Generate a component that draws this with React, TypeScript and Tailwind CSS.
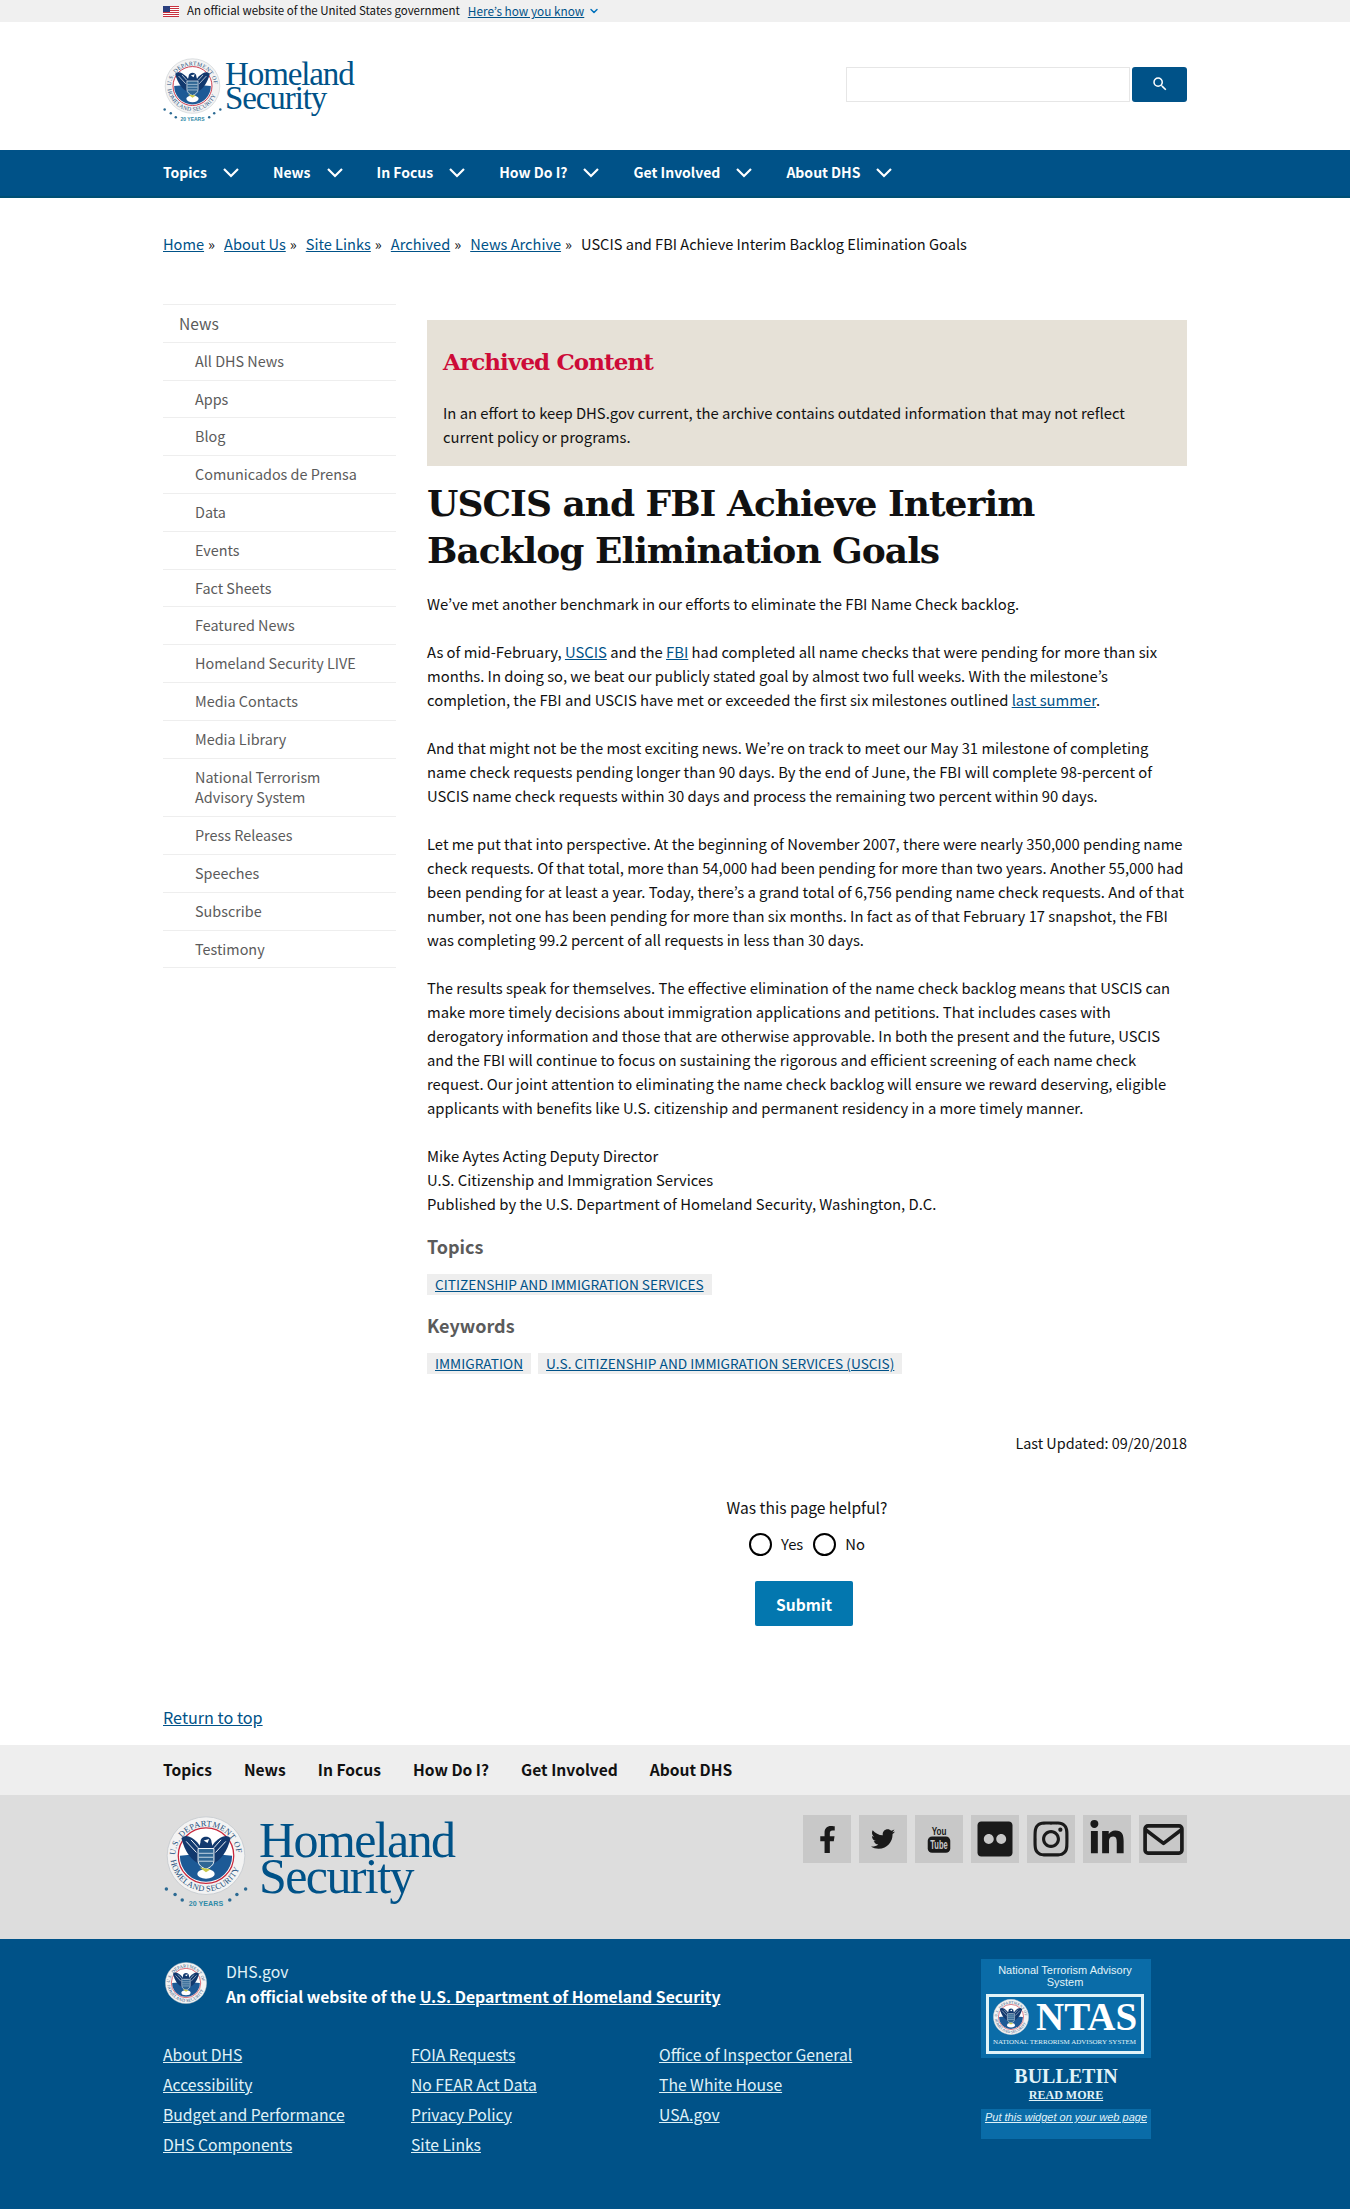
import { ChevronDown } from 'lucide-react'
import { MdSearch } from 'react-icons/md'
import { FaFacebookF, FaTwitter, FaFlickr, FaInstagram, FaLinkedinIn } from 'react-icons/fa'

const topNav = ['Topics', 'News', 'In Focus', 'How Do I?', 'Get Involved', 'About DHS']

const sideItems = [
  'All DHS News',
  'Apps',
  'Blog',
  'Comunicados de Prensa',
  'Data',
  'Events',
  'Fact Sheets',
  'Featured News',
  'Homeland Security LIVE',
  'Media Contacts',
  'Media Library',
  'National Terrorism Advisory System',
  'Press Releases',
  'Speeches',
  'Subscribe',
  'Testimony',
]

const crumbs = ['Home', 'About Us', 'Site Links', 'Archived', 'News Archive']

const footerCols = [
  ['About DHS', 'Accessibility', 'Budget and Performance', 'DHS Components'],
  ['FOIA Requests', 'No FEAR Act Data', 'Privacy Policy', 'Site Links'],
  ['Office of Inspector General', 'The White House', 'USA.gov'],
]

const stars = [[0, 92], [11, 99], [20, 106], [80, 106], [89, 99], [100, 92]]

function A({ children }: { children: React.ReactNode }) {
  return (
    <a href="#" className="text-[#005288] underline">
      {children}
    </a>
  )
}

function Seal({ id, className, anniversary }: { id: string; className: string; anniversary?: boolean }) {
  return (
    <svg viewBox={anniversary ? '-3 0 106 116' : '0 0 100 100'} className={className}>
      <circle cx="50" cy="50" r="49" fill="#f3f3f3" stroke="#c3c8cd" strokeWidth="1" />
      <path id={`${id}-top`} d="M 11 52 A 39 39 0 0 1 89 52" fill="none" />
      <path id={`${id}-bot`} d="M 5 50 A 45 45 0 0 0 95 50" fill="none" />
      <text fontFamily="Liberation Serif, serif" fontSize="10.5" fill="#1d4f7c" letterSpacing="0.5">
        <textPath href={`#${id}-top`} startOffset="2%">U.S. DEPARTMENT OF</textPath>
      </text>
      <text fontFamily="Liberation Serif, serif" fontSize="10.5" fill="#1d4f7c" letterSpacing="0.3">
        <textPath href={`#${id}-bot`} startOffset="4%">HOMELAND SECURITY</textPath>
      </text>
      <circle cx="50" cy="50" r="35" fill="#fff" stroke="#c8283c" strokeWidth="1.6" />
      {/* lower field */}
      <path d="M17 50 A33 33 0 0 0 83 50 L60 48 L50 72 L40 48 Z" fill="#1d5a96" />
      {/* wings */}
      <path d="M19 28 C24 22 32 26 39 33 L44 40 L42 60 C32 57 23 45 19 28 Z" fill="#12396e" />
      <path d="M81 28 C76 22 68 26 61 33 L56 40 L58 60 C68 57 77 45 81 28 Z" fill="#12396e" />
      <path d="M25 32 L38 46 M31 30 L40 40 M62 46 L75 32 M60 40 L69 30" stroke="#fff" strokeWidth="1.2" />
      {/* head */}
      <path d="M43 33 C43 24 57 24 57 33 L59 41 L41 41 Z" fill="#12396e" />
      <path d="M47 31 L54 29 L52 34 Z" fill="#fff" />
      {/* shield */}
      <path d="M40 41 H60 V56 C60 62 55 65 50 67 C45 65 40 62 40 56 Z" fill="#2f6694" stroke="#fff" strokeWidth="1.2" />
      <path d="M41 47 H59 M41 52 H59 M41 57 H59" stroke="#dbe7f0" strokeWidth="1.1" />
      {/* tail and branch */}
      <ellipse cx="50" cy="73" rx="11" ry="6" fill="#fff" />
      <path d="M42 65 L56 67 L50 71 Z" fill="#c9c94a" />
      {anniversary && (
        <g>
          {stars.map(([cx, cy]) => (
            <circle key={cx} cx={cx} cy={cy} r="2.2" fill="#2b6a93" />
          ))}
          <text x="50" y="113" textAnchor="middle" fontFamily="Liberation Sans, sans-serif" fontSize="9" fontWeight="700" fill="#2f8aa8">
            20 YEARS
          </text>
        </g>
      )}
    </svg>
  )
}

function Wordmark({ big }: { big?: boolean }) {
  return (
    <div
      className={`font-['Liberation_Serif',serif] text-[#005288] ${
        big ? 'text-[50px] leading-[36px] tracking-[-1.6px]' : 'text-[33px] leading-[24px] tracking-[-1.1px]'
      }`}
    >
      <div>Homeland</div>
      <div>Security</div>
    </div>
  )
}

function Flag() {
  return (
    <svg viewBox="0 0 16 11" className="h-[11px] w-[16px]">
      <rect width="16" height="11" fill="#fff" />
      {[0, 2, 4, 6, 8, 10].map((y) => (
        <rect key={y} y={y} width="16" height="1" fill="#c8313e" />
      ))}
      <rect width="7" height="6" fill="#2a3f7e" />
    </svg>
  )
}

function YouTubeMark() {
  return (
    <svg viewBox="0 0 30 36" className="h-[32px] w-[26px]">
      <text x="15" y="13" textAnchor="middle" fontFamily="Liberation Sans, sans-serif" fontSize="13" fontWeight="700" fill="#1a1a1a" textLength="17" lengthAdjust="spacingAndGlyphs">
        You
      </text>
      <rect x="2" y="15" width="26" height="19" rx="5" fill="#1a1a1a" />
      <text x="15" y="30" textAnchor="middle" fontFamily="Liberation Sans, sans-serif" fontSize="14" fontWeight="700" fill="#c8c8c8" textLength="20" lengthAdjust="spacingAndGlyphs">
        Tube
      </text>
    </svg>
  )
}

function MailMark() {
  return (
    <svg viewBox="0 0 42 32" className="h-[31px] w-[41px]" fill="none" stroke="#1a1a1a" strokeWidth="3.8" strokeLinejoin="round">
      <rect x="2" y="2" width="38" height="28" rx="3" />
      <path d="M2.5 6 L21 20 L39.5 6" />
    </svg>
  )
}

const social = [
  <FaFacebookF key="f" className="h-[27px] w-[27px] text-[#1a1a1a]" />,
  <FaTwitter key="t" className="h-[24px] w-[24px] text-[#1a1a1a]" />,
  <YouTubeMark key="y" />,
  <FaFlickr key="fl" className="h-[40px] w-[40px] text-[#1a1a1a]" />,
  <FaInstagram key="i" className="h-[40px] w-[40px] text-[#1a1a1a]" />,
  <FaLinkedinIn key="l" className="h-[38px] w-[38px] text-[#1a1a1a]" />,
  <MailMark key="m" />,
]

function Sidebar() {
  return (
    <aside className="w-[233px] shrink-0 pt-[24px]">
      <ul className="border-t border-[#eeeeee] text-[14.4px] leading-[20.8px] text-[#5b5b5b]">
        <li className="border-b border-[#eeeeee] py-[8px] pl-[16px] pr-[16px] text-[15.6px]">News</li>
        {sideItems.map((item) => (
          <li key={item} className="border-b border-[#eeeeee] py-[8px] pl-[32px] pr-[16px]">
            {item}
          </li>
        ))}
      </ul>
    </aside>
  )
}

function Article() {
  return (
    <main className="w-[760px] pt-[40px] text-[14.8px] leading-[24px] text-[#111111]">
      <div className="h-[146px] bg-[#e6e1d7] px-[16px] pt-[24px]">
        <h2 className="font-['DejaVu_Serif',serif] text-[23px] font-bold leading-[36px] tracking-[-0.9px] text-[#cd0b38]">
          Archived Content
        </h2>
        <p className="mt-[21px]">
          In an effort to keep DHS.gov current, the archive contains outdated information that may not reflect current
          policy or programs.
        </p>
      </div>

      <h1 className="mt-[14px] font-['DejaVu_Serif',serif] text-[36px] font-bold leading-[47px] tracking-[-1px] text-[#111111]">
        USCIS and FBI Achieve Interim Backlog Elimination Goals
      </h1>

      <div className="mt-[18px] space-y-[24px]">
        <p>We’ve met another benchmark in our efforts to eliminate the FBI Name Check backlog.</p>
        <p>
          As of mid-February, <A>USCIS</A> and the <A>FBI</A> had completed all name checks that were pending for more
          than six months. In doing so, we beat our publicly stated goal by almost two full weeks. With the milestone’s
          completion, the FBI and USCIS have met or exceeded the first six milestones outlined <A>last summer</A>.
        </p>
        <p>
          And that might not be the most exciting news. We’re on track to meet our May 31 milestone of completing name
          check requests pending longer than 90 days. By the end of June, the FBI will complete 98-percent of USCIS name
          check requests within 30 days and process the remaining two percent within 90 days.
        </p>
        <p>
          Let me put that into perspective. At the beginning of November 2007, there were nearly 350,000 pending name
          check requests. Of that total, more than 54,000 had been pending for more than two years. Another 55,000 had
          been pending for at least a year. Today, there’s a grand total of 6,756 pending name check requests. And of
          that number, not one has been pending for more than six months. In fact as of that February 17 snapshot, the
          FBI was completing 99.2 percent of all requests in less than 30 days.
        </p>
        <p>
          The results speak for themselves. The effective elimination of the name check backlog means that USCIS can
          make more timely decisions about immigration applications and petitions. That includes cases with derogatory
          information and those that are otherwise approvable. In both the present and the future, USCIS and the FBI will
          continue to focus on sustaining the rigorous and efficient screening of each name check request. Our joint
          attention to eliminating the name check backlog will ensure we reward deserving, eligible applicants with
          benefits like U.S. citizenship and permanent residency in a more timely manner.
        </p>
        <p>
          Mike Aytes Acting Deputy Director
          <br />
          U.S. Citizenship and Immigration Services
          <br />
          Published by the U.S. Department of Homeland Security, Washington, D.C.
        </p>
      </div>

      <h3 className="mt-[16px] text-[18px] font-bold leading-[28px] text-[#5b5b5b]">Topics</h3>
      <div className="mt-[14px] flex gap-[7px] text-[13.7px] leading-[21px]">
        <span className="bg-[#eeeeee] px-[8px]">
          <A>CITIZENSHIP AND IMMIGRATION SERVICES</A>
        </span>
      </div>
      <h3 className="mt-[16px] text-[18px] font-bold leading-[28px] text-[#5b5b5b]">Keywords</h3>
      <div className="mt-[14px] flex gap-[7px] text-[13.7px] leading-[21px]">
        <span className="bg-[#eeeeee] px-[8px]">
          <A>IMMIGRATION</A>
        </span>
        <span className="bg-[#eeeeee] px-[8px]">
          <A>U.S. CITIZENSHIP AND IMMIGRATION SERVICES (USCIS)</A>
        </span>
      </div>

      <p className="mt-[57px] text-right text-[14.4px]">Last Updated: 09/20/2018</p>

      {/* Feedback */}
      <form className="mt-[40px] flex flex-col items-center">
        <p className="text-[15.6px]">Was this page helpful?</p>
        <div className="mt-[13px] flex h-[24px] items-center">
          <span className="h-[23px] w-[23px] rounded-full border-2 border-black" />
          <span className="ml-[9px]">Yes</span>
          <span className="ml-[10px] h-[23px] w-[23px] rounded-full border-2 border-black" />
          <span className="ml-[9px]">No</span>
        </div>
        <button className="mr-[6px] mt-[25px] h-[45px] w-[98px] rounded-[2px] bg-[#0377af] text-[15.6px] font-bold text-white">
          Submit
        </button>
      </form>
    </main>
  )
}

export default function App() {
  return (
    <div className="flex min-h-[2209px] flex-col bg-white font-['Noto_Sans_CJK_KR','Open_Sans',sans-serif]">
      {/* Gov banner */}
      <div className="h-[22px] bg-[#f0f0f0]">
        <div className="mx-auto flex h-full w-[1024px] items-center text-[11.5px] text-[#111111]">
          <Flag />
          <span className="ml-[8px]">An official website of the United States government</span>
          <a href="#" className="ml-[8px] text-[11.8px] text-[#005288] underline">
            Here’s how you know
          </a>
          <ChevronDown className="ml-[4px] h-[12px] w-[12px] text-[#0071bc]" strokeWidth={3} />
        </div>
      </div>

      {/* Header */}
      <header className="mx-auto flex h-[128px] w-[1024px] items-center justify-between">
        <div className="flex items-center gap-[3px] pt-[9px]">
          <Seal id="hd" className="h-[65px] w-[59px]" anniversary />
          <div className="pb-[10px]">
            <Wordmark />
          </div>
        </div>
        <div className="flex gap-[2px] pb-[4px]">
          <div className="h-[35px] w-[284px] border border-[#e6e6e6] bg-white" />
          <button className="flex h-[35px] w-[55px] items-center justify-center rounded-[3px] bg-[#005288] text-white">
            <MdSearch className="h-[18px] w-[18px]" />
          </button>
        </div>
      </header>

      {/* Main nav */}
      <nav className="h-[48px] border-b-2 border-[#004f73] bg-[#005288] pb-[2px]">
        <ul className="mx-auto flex h-full w-[1024px] items-center gap-[33px] text-[14px] font-bold text-white">
          {topNav.map((item) => (
            <li key={item} className="flex items-center gap-[15px]">
              {item}
              <svg viewBox="0 0 18 11" className="h-[11px] w-[18px]" fill="none" stroke="#fff" strokeWidth="2.2">
                <path d="M2 2 L9 9 L16 2" />
              </svg>
            </li>
          ))}
        </ul>
      </nav>

      <div className="mx-auto w-[1024px]">
        {/* Breadcrumb */}
        <div className="mt-[34px] flex h-[24px] items-center text-[14.6px] text-[#111111]">
          {crumbs.map((c) => (
            <span key={c} className="mr-[9px]">
              <A>{c}</A>
              <span className="ml-[4px]">»</span>
            </span>
          ))}
          <span>USCIS and FBI Achieve Interim Backlog Elimination Goals</span>
        </div>

        <div className="mt-[24px] flex gap-[31px]">
          <Sidebar />
          <Article />
        </div>

        <a href="#" className="mt-[79px] block text-[16.2px] leading-[24px] text-[#005288] underline">
          Return to top
        </a>
      </div>

      {/* Footer */}
      <div className="mt-[16px] h-[50px] bg-[#eeeeee]">
        <ul className="mx-auto flex h-full w-[1024px] items-center gap-[32px] text-[15.6px] font-bold text-[#111111]">
          {topNav.map((item) => (
            <li key={item}>{item}</li>
          ))}
        </ul>
      </div>

      <div className="h-[144px] bg-[#dddddd]">
        <div className="mx-auto flex w-[1024px] justify-between pt-[20px]">
          <div className="flex gap-[11px]">
            <Seal id="ft" className="ml-[1px] h-[94px] w-[84px]" anniversary />
            <div className="pt-[7px]">
              <Wordmark big />
            </div>
          </div>
          <div className="flex gap-[8px]">
            {social.map((icon) => (
              <span key={icon.key} className="flex h-[48px] w-[48px] items-center justify-center bg-[#c8c8c8]">
                {icon}
              </span>
            ))}
          </div>
        </div>
      </div>

      <footer className="flex-1 bg-[#005288] text-white">
        <div className="mx-auto flex w-[1024px] justify-between">
          <div className="pt-[20px]">
            <div className="flex gap-[19px]">
              <Seal id="bt" className="ml-[2px] mt-[3px] h-[42px] w-[42px]" />
              <div className="text-[15.75px] leading-[25px]">
                <div className="text-[#e1f3f8]">DHS.gov</div>
                <div className="font-bold">
                  An official website of the <span className="underline">U.S. Department of Homeland Security</span>
                </div>
              </div>
            </div>
            <div className="mt-[31px] flex text-[15.7px] leading-[30px] text-[#e1f3f8]">
              {footerCols.map((col) => (
                <ul key={col[0]} className="w-[248px]">
                  {col.map((link) => (
                    <li key={link} className="underline">
                      {link}
                    </li>
                  ))}
                </ul>
              ))}
            </div>
          </div>
          <div className="mr-[36px] mt-[20px] w-[170px] text-center">
            <div className="h-[99px] bg-[#0a6ca8] pl-[5px] pr-[7px] pt-[5px] font-['Liberation_Sans',sans-serif] text-[11px] leading-[12px] text-[#e1f3f8]">
              National Terrorism Advisory System
              <div className="mt-[6px] flex h-[60px] flex-col items-start border-[3px] border-[#e1f3f8] pl-[4px]">
                <div className="flex items-center gap-[7px]">
                  <Seal id="nt" className="h-[36px] w-[36px]" />
                  <span className="font-['Liberation_Serif',serif] text-[39px] font-bold leading-[40px] text-white">NTAS</span>
                </div>
                <div className="whitespace-nowrap font-['Liberation_Serif',serif] text-[7px] leading-[10px]">
                  NATIONAL TERRORISM ADVISORY SYSTEM
                </div>
              </div>
            </div>
            <div className="mt-[7px] font-['Liberation_Serif',serif] text-[20px] font-bold leading-[22px] text-[#e1f3f8]">BULLETIN</div>
            <div className="mt-[1px] font-['Liberation_Serif',serif] text-[12px] font-bold leading-[14px] text-[#e1f3f8] underline">READ MORE</div>
            <div className="mt-[7px] h-[30px] bg-[#0a6ca8] pt-[1px] font-['Liberation_Sans',sans-serif] text-[11px] italic leading-[14px] text-[#e1f3f8] underline">
              Put this widget on your web page
            </div>
          </div>
        </div>
      </footer>
    </div>
  )
}
